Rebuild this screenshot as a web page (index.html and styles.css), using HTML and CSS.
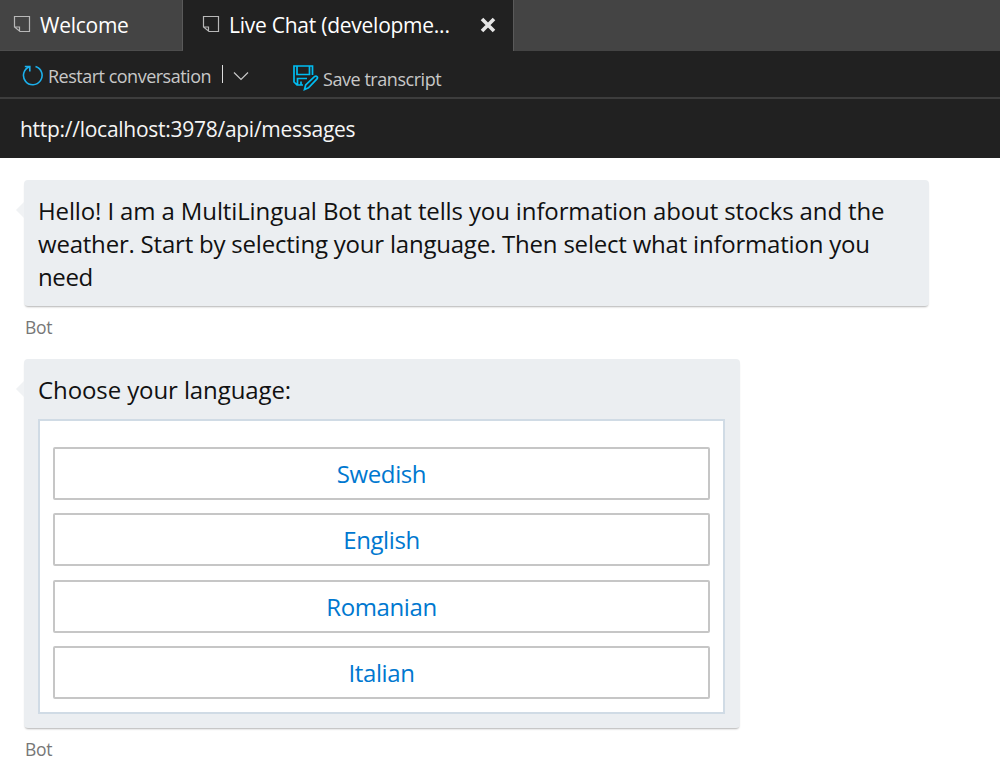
FILE: index.html
```html
<!DOCTYPE html>
<html lang="en">
<head>
<meta charset="utf-8">
<title>Live Chat</title>
<link rel="stylesheet" href="styles.css">
</head>
<body>
<header class="tabs">
  <div class="tab tab-idle">
    <svg class="doc" width="18" height="18" viewBox="0 0 18 18"><path d="M1.500 1.500h15v15H7l-5.500-4.500zM2 12h4.500v4"/></svg>
    <span class="tab-label welcome">Welcome</span>
  </div>
  <div class="tab tab-active">
    <svg class="doc" width="18" height="18" viewBox="0 0 18 18"><path d="M1.500 1.500h15v15H7l-5.500-4.500zM2 12h4.500v4"/></svg>
    <span class="tab-label live">Live Chat (developme...</span>
    <svg class="close" width="16" height="16" viewBox="0 0 16 16"><path d="M2 2l12 12M14 2L2 14"/></svg>
  </div>
</header>
<nav class="toolbar">
  <svg class="restart-icon" width="22" height="23" viewBox="0 0 22 23"><path d="M13.500 2.500A9.300 9.300 0 1 1 7.500 2.700M2.800 2.500h5v5"/></svg>
  <span class="tool restart">Restart conversation</span>
  <span class="divider"></span>
  <svg class="chevron" width="16" height="10" viewBox="0 0 16 10"><path d="M1 1.500l7 7 7-7"/></svg>
  <svg class="save-icon" width="26" height="26" viewBox="0 0 26 26"><path d="M10 20H4L1 17V1h18.500v9M4 1v8.500h12.500V1M4.500 20v-6.500H14M8 20v-3.500M11.500 24.500l1.200-4.500 9-8.500q1.300-.900 2.300.100t0 2.300l-8.500 9z"/></svg>
  <span class="tool save">Save transcript</span>
</nav>
<div class="address">http://localhost:3978/api/messages</div>
<main class="chat">
  <section class="bubble intro">
    <div class="l1">Hello! I am a MultiLingual Bot that tells you information about stocks and the</div>
    <div class="l2">weather. Start by selecting your language. Then select what information you</div>
    <div class="l3">need</div>
  </section>
  <div class="sender">Bot</div>
  <section class="bubble choices">
    <div class="prompt">Choose your language:</div>
    <div class="card">
      <button class="option">Swedish</button>
      <button class="option">English</button>
      <button class="option">Romanian</button>
      <button class="option">Italian</button>
    </div>
  </section>
  <div class="sender">Bot</div>
</main>
</body>
</html>
```
FILE: styles.css
```css
* { box-sizing: border-box; }
body { margin: 0; height: 764px; overflow: hidden; background: #fff; font-family: "Open Sans", "Noto Sans", sans-serif; white-space: nowrap; }
svg { flex: none; fill: none; }
.tabs { display: flex; height: 51px; background: #444; color: #fff; }
.tab { display: flex; height: 51px; border-right: 1px solid #5a5a5a; }
.tab-idle { width: 183px; padding-left: 13px; border-bottom: 1px solid #4d4d4d; }
.tab-active { width: 331px; padding-left: 19px; background: #212121; }
.doc { margin-top: 15px; stroke: #b8b8b8; stroke-width: 1.2; }
.tab-label { flex: none; margin-left: 9px; font-size: 21px; line-height: 51px; letter-spacing: -0.25px; }
.live { width: 250px; }
.close { margin: 17px 0 0 1px; stroke: #e6e6e6; stroke-width: 3.6; }
.toolbar { display: flex; height: 48px; border-bottom: 2px solid #3d3d3d; background: #212121; color: #c8c8c8; }
.restart-icon { margin: 13px 0 0 22px; stroke: #1cb0ec; stroke-width: 1.6; }
.tool { font-size: 18px; line-height: 50px; }
.restart { width: 173px; margin-left: 4px; letter-spacing: -0.5px; }
.divider { width: 1px; height: 18px; margin-top: 14px; margin-left: 1px; background: #ddd; }
.chevron { margin: 20px 0 0 10px; stroke: #c8c8c8; stroke-width: 1.2; }
.save-icon { margin: 14px 0 0 44px; stroke: #00bdf2; stroke-width: 1.7; }
.save { margin: 3px 0 0 4px; letter-spacing: -0.45px; }
.address { height: 59px; padding-left: 20px; background: #212121; color: #f5f5f5; font-size: 21px; line-height: 61px; letter-spacing: -0.27px; }
.chat { padding: 22px 24px 0; }
.bubble { position: relative; border-radius: 4px; background: #ebeef1; color: #111; font-size: 24px; line-height: 33px; box-shadow: 0 2px 2px -1px rgba(0,0,0,.3); }
.bubble::before { content: ""; position: absolute; left: -8px; top: 22px; border: solid transparent; border-width: 8px 8px 8px 0; border-right-color: #f0f2f4; }
.intro { width: 905px; height: 126px; padding: 14px; }
.l1 { letter-spacing: -0.125px; }
.l2 { letter-spacing: -0.21px; }
.l3 { letter-spacing: -0.4px; }
.prompt { letter-spacing: -0.1px; }
.sender { padding-left: 1px; margin-top: 9px; height: 24px; font-size: 17.500px; line-height: 24px; letter-spacing: -0.3px; color: #777; }
.choices { width: 716px; height: 369px; margin-top: 20px; padding: 14px; }
.card { display: flex; flex-direction: column; gap: 13.300px; width: 687px; height: 295px; margin-top: 13px; padding: 26px 13px 0; border: 2px solid #d0dbe5; background: #fff; }
.option { height: 53px; padding: 1px 0 0; border: 2px solid #c6c6c6; border-radius: 2px; background: #fff; color: #0078d0; font-family: inherit; font-size: 24px; line-height: 48px; letter-spacing: -0.4px; }
```
